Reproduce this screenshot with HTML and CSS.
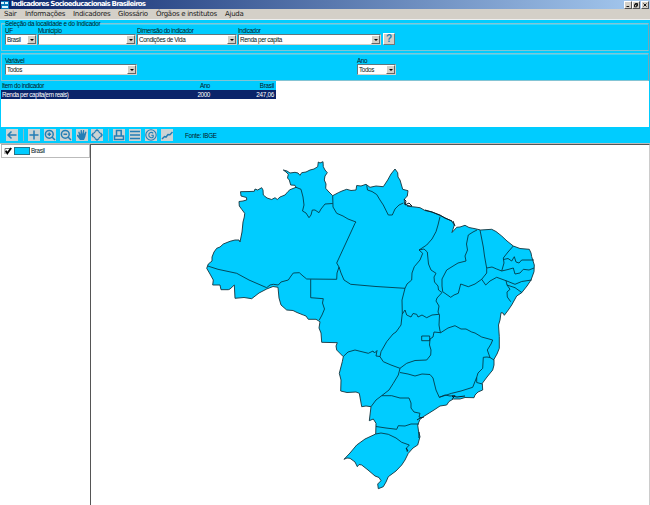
FILE: index.html
```
<!DOCTYPE html>
<html lang="pt-BR">
<head>
<meta charset="utf-8">
<title>Indicadores Socioeducacionais Brasileiros</title>
<link rel="stylesheet" href="styles.css">
</head>
<body>
<header class="titlebar">
  <svg class="appicon" viewBox="0 0 8 8"><path fill="#0879b9" d="M0 0h8v8H0z"/><path fill="#d8f2ff" d="M0 1h3v2H0zM4 1h3v2H4zM1 5h6v2H1z"/></svg>
  <h1>Indicadores Socioeducacionais Brasileiros</h1>
  <div class="winbtns">
    <span><svg viewBox="0 0 8 7"><path d="M2 5.5h3.5"/></svg></span><span><svg viewBox="0 0 8 7"><path d="M3 3V1.5h3v3H5M2 3h3v3H2z"/></svg></span><span class="close"><svg viewBox="0 0 8 7"><path d="M2 1.5l4 4M6 1.5l-4 4"/></svg></span>
  </div>
</header>
<nav class="menu"><span class="m1">Sair</span><span class="m2">Informações</span><span class="m3">Indicadores</span><span class="m4">Glossário</span><span class="m5">Órgãos e institutos</span><span class="m6">Ajuda</span></nav>
<main>
  <section class="group first">
    <div class="legend"><span>Seleção da localidade e do Indicador</span></div>
    <div class="fields">
      <div class="field uf"><label>UF</label><div class="select"><span>Brasil</span><i></i></div></div>
      <div class="field mun"><label>Município</label><div class="select"><span></span><i></i></div></div>
      <div class="field dim"><label>Dimensão do indicador</label><div class="select"><span>Condições de Vida</span><i></i></div></div>
      <div class="field ind"><label>Indicador</label><div class="select"><span>Renda per capita</span><i></i></div></div>
      <button class="help">?</button>
    </div>
  </section>
  <section class="group second">
    <div class="fields">
      <div class="field var"><label>Variável</label><div class="select"><span>Todos</span><i></i></div></div>
      <div class="field ano"><label>Ano</label><div class="select"><span>Todos</span><i></i></div></div>
    </div>
  </section>
  <section class="results">
    <div class="row head"><span>Item do indicador</span><span>Ano</span><span>Brasil</span></div>
    <div class="row sel"><span>Renda per capita(em reais)</span><span>2000</span><span>247,06</span></div>
  </section>
  <section class="toolbar">
    <svg class="tool" viewBox="0 0 12 12"><path d="M10.5 6H2M5.5 2.500L2 6l3.500 3.500"/></svg>
    <i class="sep s1"></i>
    <svg class="tool" viewBox="0 0 12 12"><path d="M6 1.500v9M1.500 6h9"/></svg>
    <svg class="tool" viewBox="0 0 12 12"><circle cx="5.3" cy="5.3" r="3.900"/><path d="M8 8l3 3M3.500 5.300h3.600M5.300 3.500v3.600"/></svg>
    <svg class="tool" viewBox="0 0 12 12"><circle cx="5.3" cy="5.3" r="3.900"/><path d="M8 8l3 3M3.500 5.300h3.600"/></svg>
    <svg class="tool" viewBox="0 0 12 12"><path class="solid" d="M4 11L1 7V5.500l2 1L2.200 3l1-.4L4.500 5 4.600 1h1.200l.4 4 .9-4h1.100l-.1 4L9.500 2.500l1 .5L9.300 8 8 11z"/></svg>
    <svg class="tool" viewBox="0 0 12 12"><path d="M4 2.500L6 1l2 1.500M4 9.500L6 11l2-1.500M2.500 4L1 6l1.500 2M9.500 4L11 6 9.500 8M4 3L3 4M8 3l1 1M4 9L3 8M8 9l1-1"/></svg>
    <i class="sep s2"></i>
    <svg class="tool" viewBox="0 0 12 12"><path d="M3.500 6.500v-5h4.700v5M1.500 7h9v3.500h-9z"/></svg>
    <svg class="tool" viewBox="0 0 12 12"><path d="M1 2.500h10M1 6h10M1 9.500h10"/></svg>
    <svg class="tool fine" viewBox="0 0 12 12"><circle cx="6" cy="6" r="5.200"/><path d="M8.200 4.300C6.800 2.600 3.800 3.400 3.800 6s2.800 3.400 4.400 2V6.300H6.300"/></svg>
    <svg class="tool" viewBox="0 0 12 12"><path d="M1 10l2.500-2.500 1.500.5 2-2.500 2 .3L11.500 3"/></svg>
    <span class="source">Fonte: IBGE</span>
  </section>
  <section class="work">
    <aside><div class="layer"><svg class="check" viewBox="0 0 8 8"><path class="box" d="M1 7V1.500h5.500"/><path d="M1.800 3.800L3.300 6.300 7.200 1"/></svg><i class="swatch"></i><span>Brasil</span></div></aside>
    <div class="mapview">
      <svg viewBox="91 145 558 360">
        <path class="land" d="M212 257L214 252 216.700 248.300 220 247 223.300 244 230 241.300 235 240 239 240 240 242 242 232 243 222 244.300 217 244.700 213.300 241.700 209.300 239.300 206 239 201.500 243 201 246.700 200 246.500 197.500 241 196 240.500 191.700 250 191.500 254.300 191.300 255 189 257.700 190 261.700 187.700 263 190 263.300 195 267 198 271.700 199.500 275 197.700 277.300 199.500 280 197 285 195 288 191.500 290 189.700 296 187.300 295 185.300 290.700 185 289.300 180 287.500 178 288.300 174.300 286 172 283.300 170 287 171 290 173 295 172.300 298 173 300 175.300 301.700 172.700 306 172 310 170 314 169 317.700 166.700 318.300 162 320 163 323 161.700 323.300 166.700 325 170 327.300 172.700 325 176 324.300 180 326 184 325.700 188.300 328 191 332.700 195.700 338.300 192.700 342 191 346.700 189.300 351 190.500 356 190 356.700 185.500 361 186 366 184.300 370 187.300 376 186 383.300 186.700 387.700 180 391 174 395 169 397.700 172.700 398 177 400 180 402.700 189.300 408 190.700 407.300 196 404.300 199.300 404.500 204 410 206.500 415 207 420 207.700 425 210.500 432 212 440 215.500 445 218 451.700 221 454.300 225 452 232.500 456.700 227.300 460 227 465 225.300 469 227.500 475 228.700 480.700 230 491.700 229.300 496 231.500 501.700 236 507 241 513.300 246 520 248.500 529.300 249.300 531 253 531.700 256.700 534.300 265 534 271.700 531 280 527 286 521.700 292.700 516.700 296 511.700 305 508.300 310 504.300 315.300 503 313 501 312.700 500 320 498.500 325 499.300 336.700 499.300 348.300 497 354 494 359.300 494 365 492.700 370 487 377 482.300 383.300 482.700 390 478 392 475 395 474 397.700 465 397.500 460 399 453.300 399 449 401.500 446.700 405 440 406 434 410 423.300 416.700 420 419.300 417.700 425 418.500 431 420 436.700 417.700 445 413 448 408.300 453.300 405 460 401.700 465 396 471 388.300 476.700 386 482 383.300 486.700 378.300 488.700 377.700 484 381 480.700 379 477.500 375 476 368 470 361.700 465 359 464.500 357.300 466.700 355 462 350 458.300 347 458 344 459.300 350 453 356.700 445 365 439 375.700 434 376 423.300 373.300 419 369.300 420.700 371 406.700 366 406 361.700 406.700 359.300 393.300 356 392 347 392.500 340.700 391 341 380 339.300 373.300 342.300 361.700 343.300 356.700 336.700 350 336 346 337.300 342.700 321.700 342.300 321 333 319 328 320 321.700 316 319.300 308.300 319.300 306 316 303.300 315 297 312.500 293 310.500 286.700 310 281 305 279 298 278 287.300 273 286.500 266.700 289 259 293 251.700 298.700 244 297.500 235 298.300 234.300 285 230 289 228.300 289.700 221 289.700 220 285 212.700 285 213.300 280 210 274 206.700 268.300 208.300 264 212 261Z"/>
        <g class="borders">
          <path d="M207.700 266L218 269.300 236.700 273.300 249 280 266.700 287.700 270 285 273.300 284.300 278.300 285 281 282 288.300 280 291 276 293.300 273 299.300 272.700 303 276 306.700 279 336.700 279.300 337 273 339 267 336.700 263 355 223.300 356 222 348 219 343 216 336.700 213.300 333 207 332.700 195.700"/>
          <path d="M310.700 279.300V297.700L323.300 298.700 322.500 303 324.500 309 322 315 319.300 320"/>
          <path d="M296 187.300L301 189.300 303 197 304 205 302.500 211 306 213 309 217.700 311 215 312.300 210 315 210 319 212.700 321 209 325 204 332.700 203.500"/>
          <path d="M339 267L341 273 344 280 350.700 284.300 376 286.500 405 288.300"/>
          <path d="M366.700 185.300L367.500 190 372 191.500 376.700 194.500 380 200 383.300 205 388.300 215H392.300L395 209 399 205 403.300 203"/>
          <path d="M440 216.700L438 225 436 231.700 432 239 426.700 245 419 250 422.700 253.300 420 260 414.300 266.700 412 273 411.700 280 407 284 405 288.300 402 300 402.300 313.300 401 325 396 332 393 334 386.700 341.700 381 351.700 380 356.700 383.300 361.700 391 365 400 368.300 398.300 375 393.300 383.300 389 390 381.700 395.700 376 400 371 406.700"/>
          <path d="M419 250L424 249 427.300 252 428.500 264 431 270 436 273.300 434 277 434.500 282 438 286 438.500 290 442 292.500 437 298 436 301 439 306 438 312 439.500 315 439 325 440 331 440.700 332.700"/>
          <path d="M402.300 314L405 310 406.700 315 411 317 413 313.500 416.700 314.300 418 317 422 315 426.700 317.700 432 315 439 314.300"/>
          <path d="M343.300 356.500L348 352 355 350 361 351.500 368.300 353.300 373 351 374.500 353 377 350.500 376 356 380 356.500"/>
          <path d="M440.700 332.700L434 332 433 337 430 339 429.500 345 431 350 430.700 355 426.700 360 415 360.500 406.700 363.300 400 368.300M421.700 336h8v4.700h-8z"/>
          <path d="M440.700 332.700L448 328 455 325.700 461 329 466 329 471.700 332 475 333 481.700 337 492.700 340 491 344 487.300 350 490 357.500 487 357 483.300 357.300 482.700 368.300 478 373 476.700 377.300 472.700 387.300 461 391 451.700 393.300 439.300 397.300 436 390 433 378 430 374.500 422 374 415 376 408 374 400 372.500M490 357.500L494 360M476.700 377.300V382.500L482.300 384M439.300 397.300L445 395 450 396 455 395.500 452 399"/>
          <path d="M381.700 395.700L391.700 395.700 400 398 409 398 411 403 411 408 414 412 420 413.300 419 417 422 418"/>
          <path d="M376 426.500L386 428 396.700 429.300 398.300 425.700 405 426 411 424 419 424M375.700 434L381 433 388.300 434.300 396 438 401.700 442.300 409.300 445 406.500 448 407.300 452"/>
          <path d="M477 230L473 232 468.300 235 466.500 244 467.500 250 465 256 466 261 458 263 446.700 270 442 279 442 286 442.700 291.700 450.700 297.300 454 295 458.300 293.300 460.700 284 468.300 286.700 475 284 481.700 279.300 486.700 273 486.700 268.300 484.500 256 483.300 247 480 230"/>
          <path d="M486.700 268L492 267 496.700 269 501.700 271 504 263 503.300 258 508 252 513.300 246M503.500 259.500L508 258.500 511.700 261 514.300 256.700 516 262 519 263 521.700 260 534 260M501.700 271L508 269.500 513.300 268 515 274 520 273 523.300 269.300 529 270 534 268M481.700 279.300L485.700 285 490 281 496.700 277.300 506 280.700 515 284.300 521.700 281.500 531.700 280M506 280.700L507 285 515 287.700 522 292.700M507 285L510 289.300 507 292 507.300 297 510.700 301.700"/>
        </g>
        <path class="coast" d="M404 199l2 2-1 4 4-2 3 3-5 0M425 210l7 2 8 3 5 3 7 3M453 221l2 5M454 398l-2-2 5 1 8-1M417 420l3-2 4-1M419 432v6M406 448l2 3"/>
      </svg>
    </div>
  </section>
</main>
</body>
</html>
```
FILE: styles.css
```
* { box-sizing: border-box; }
body { margin: 0; width: 650px; height: 505px; overflow: hidden; display: flex; flex-direction: column; background: #fff; color: #061820; font: 6.3px/7px "Liberation Sans", sans-serif; letter-spacing: -.38px; }
span, label { white-space: nowrap; }
.titlebar { height: 9px; display: flex; align-items: center; background: linear-gradient(90deg, #0a246a, #a6caf0); padding-left: 1px; }
.appicon { width: 8px; height: 8px; margin-right: 2px; }
h1 { margin: 0; font: bold 7px/9px "DejaVu Sans", sans-serif; letter-spacing: -.76px; color: #fff; flex: 1; white-space: nowrap; }
.winbtns { display: flex; padding-right: 1px; }
.winbtns span { width: 8px; height: 8px; background: #d4d0c8; border: 1px solid; border-color: #fff #555 #555 #fff; }
.winbtns .close { margin-left: 1px; }
.winbtns svg { display: block; width: 6px; height: 6px; fill: none; stroke: #000; stroke-width: 1.2; }
.menu { height: 11px; display: flex; background: #d4d0c8; padding-left: 4px; font: 7px/11px "DejaVu Sans", sans-serif; letter-spacing: -.28px; color: #222; border-bottom: 1px solid #eee; }
.m1 { width: 21px; } .m2 { width: 48px; } .m3 { width: 45px; } .m4 { width: 38px; } .m5 { width: 69px; }
main { flex: 1; display: flex; flex-direction: column; background: #00ccff; min-height: 0; padding-left: 1px; }
.group { border: 1px solid #83c4d4; border-right-color: #78a4b4; margin-right: 1px; height: 28px; box-shadow: inset 0 1px #39d5f7; }
.first { margin-top: 3px; }
.second { margin-top: 2px; }
.legend { height: 4px; margin-top: -4px; padding-left: 3px; line-height: 7px; letter-spacing: -.22px; }
.legend span { background: #00ccff; display: inline-block; height: 7px; }
.fields { display: flex; padding-left: 3px; }
.first .fields { padding-top: 4px; }
.second .fields { padding-top: 4px; }
.field { margin-right: 1px; }
.field label { display: block; height: 6px; line-height: 6px; }
.select { height: 11px; background: #fff; border: 1px solid; border-color: #5f777e #d4d0c8 #d4d0c8 #5f777e; display: flex; justify-content: space-between; line-height: 9px; padding-left: 1px; }
.select i { width: 9px; height: 9px; background: #d4d0c8; border: 1px solid; border-color: #fff #666 #666 #fff; display: flex; align-items: center; justify-content: center; }
.select i::after { content: ""; border: 2px solid transparent; border-top: 2px solid #000; border-bottom: 0; }
.uf { width: 32px; } .mun { width: 98px; } .dim { width: 100px; } .ind { width: 143px; }
.var { width: 132px; margin-right: 220px; } .ano { width: 39px; }
.help { width: 12px; height: 12px; margin: 5px 0 0 1px; padding: 0; background: #d4d0c8; border: 1px solid; border-color: #fff #777 #777 #fff; color: #207db5; font: bold 10px/10px "Liberation Sans", sans-serif; }
.results { height: 46px; background: #fff; margin-right: 1px; }
.row { width: 275px; height: 9px; line-height: 10px; display: grid; grid-template-columns: 180px 28px 1fr; padding: 0 2px 0 1px; background: #00ccff; }
.row span + span { text-align: right; }
.row span:last-child { letter-spacing: -.25px; }
.sel { background: #0a246a; color: #fff; line-height: 9px; }
.toolbar { height: 16px; display: flex; align-items: center; padding-left: 5px; }
.tool { width: 12px; height: 12px; margin-right: 3.900px; background: #cbd3d4; fill: none; stroke: #247eb5; stroke-width: 1.5; flex: none; }
.tool .solid { fill: #247eb5; stroke: none; }
.fine { stroke-width: 1.1; }
.sep { width: 1px; height: 12px; background: #8bbdc8; margin: 0 4px 0 1px; }
.sep.s2 { margin-left: 1px; }
.source { margin-left: 8px; letter-spacing: -.25px; }
.work { flex: 1; min-height: 0; display: flex; background: #fff; border-top: 1px solid #bbb; margin-left: -1px; padding-left: 1px; }
aside { width: 89px; border-top: 1px solid #aaa; }
.layer { height: 13px; border: 1px solid #bbb; border-top: 0; display: flex; align-items: center; padding-left: 2px; line-height: 12px; }
.check { width: 8px; height: 8px; margin-right: 2px; fill: none; stroke: #000; stroke-width: 1.8; }
.check .box { stroke: #777; stroke-width: 1; }
.swatch { width: 16px; height: 8px; background: #00ccff; border: 1px solid #287386; margin-right: 1px; }
.mapview { flex: 1; border-left: 1px solid #555; border-top: 1px solid #555; border-right: 1px solid #ccc; }
.mapview svg { display: block; width: 558px; height: 360px; }
.land { fill: #00ccff; stroke: #15323b; stroke-width: .9; stroke-linejoin: round; }
.borders { fill: none; stroke: #04323f; stroke-width: .85; stroke-linejoin: round; }
.coast { fill: none; stroke: #06202a; stroke-width: 1; }
```
